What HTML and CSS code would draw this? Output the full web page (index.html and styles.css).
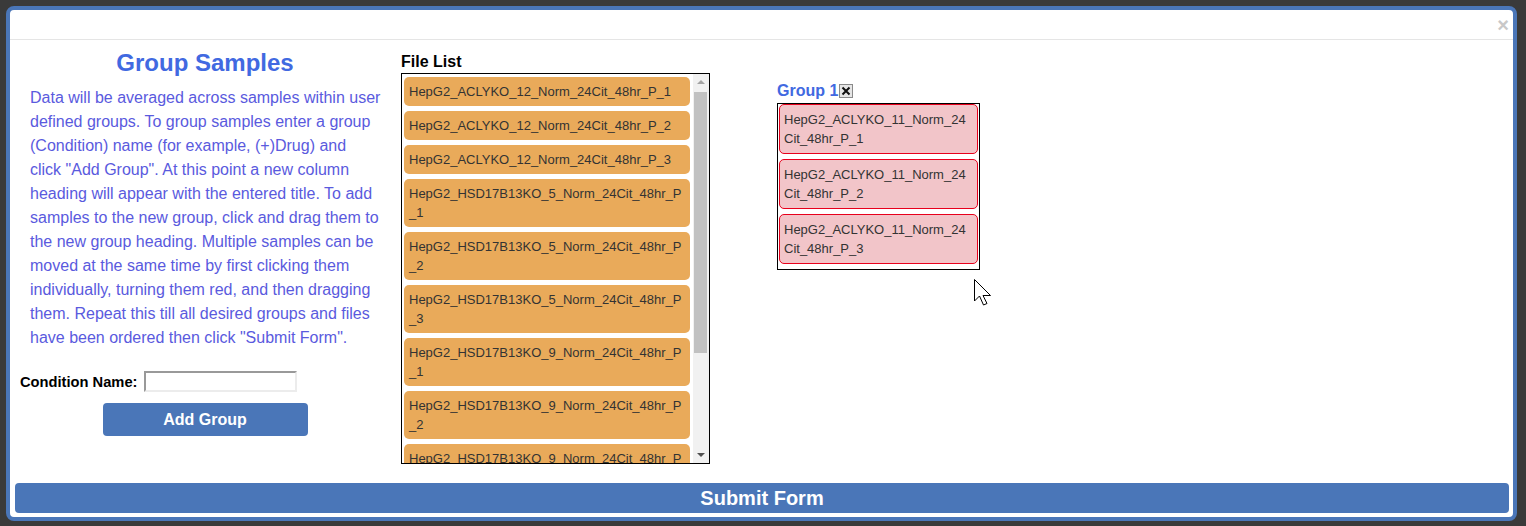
FILE: index.html
```html
<!DOCTYPE html>
<html lang="en">
<head>
    <meta charset="UTF-8">
    <title>Group Samples</title>
    <link rel="stylesheet" href="styles.css">
</head>
<body>
    <div class="modal">
        <div class="modal-header">
            <span class="close">&times;</span>
        </div>
        <div class="modal-body">
            <div class="intro">
                <h2>Group Samples</h2>
                <p>Data will be averaged across samples within user defined groups. To group samples enter a group (Condition) name (for example, (+)Drug) and click "Add Group". At this point a new column heading will appear with the entered title. To add samples to the new group, click and drag them to the new group heading. Multiple samples can be moved at the same time by first clicking them individually, turning them red, and then dragging them. Repeat this till all desired groups and files have been ordered then click "Submit Form".</p>
                <div class="condition-row">
                    <label for="condition">Condition Name:</label>
                    <input type="text" id="condition">
                </div>
                <button class="btn add-btn">Add Group</button>
            </div>

            <div class="file-col">
                <div class="col-title">File List</div>
                <div class="file-list">
                    <div class="file-items">
                        <div class="sample">HepG2_ACLYKO_12_Norm_24Cit_48hr_P_1</div>
                        <div class="sample">HepG2_ACLYKO_12_Norm_24Cit_48hr_P_2</div>
                        <div class="sample">HepG2_ACLYKO_12_Norm_24Cit_48hr_P_3</div>
                        <div class="sample">HepG2_HSD17B13KO_5_Norm_24Cit_48hr_P_1</div>
                        <div class="sample">HepG2_HSD17B13KO_5_Norm_24Cit_48hr_P_2</div>
                        <div class="sample">HepG2_HSD17B13KO_5_Norm_24Cit_48hr_P_3</div>
                        <div class="sample">HepG2_HSD17B13KO_9_Norm_24Cit_48hr_P_1</div>
                        <div class="sample">HepG2_HSD17B13KO_9_Norm_24Cit_48hr_P_2</div>
                        <div class="sample">HepG2_HSD17B13KO_9_Norm_24Cit_48hr_P_3</div>
                    </div>
                    <div class="scrollbar">
                        <div class="scroll-btn up"></div>
                        <div class="scroll-track"><div class="scroll-thumb"></div></div>
                        <div class="scroll-btn down"></div>
                    </div>
                </div>
            </div>

            <div class="group-col">
                <div class="group-title">Group 1<svg class="remove" width="14" height="14" viewBox="0 0 14 14"><rect x="0.5" y="0.5" width="13" height="13" fill="#e6e6e6" stroke="#8a8a8a"/><path d="M3.5 3.5 L10.5 10.5 M10.5 3.5 L3.5 10.5" stroke="#111" stroke-width="2"/></svg></div>
                <div class="group-box">
                    <div class="sample picked">HepG2_ACLYKO_11_Norm_24Cit_48hr_P_1</div>
                    <div class="sample picked">HepG2_ACLYKO_11_Norm_24Cit_48hr_P_2</div>
                    <div class="sample picked">HepG2_ACLYKO_11_Norm_24Cit_48hr_P_3</div>
                </div>
            </div>
        </div>
        <div class="modal-footer">
            <button class="btn submit-btn">Submit Form</button>
        </div>

        <svg class="cursor" width="20" height="28" viewBox="0 0 20 28"><path d="M0.5 0.5 V22 L5.5 17 L9.5 26 L13 24.5 L9 16.5 H16.5 Z" fill="#fff" stroke="#000" stroke-width="1"/></svg>
    </div>
</body>
</html>
```

FILE: styles.css
```css
body {
    margin: 0;
    background: #3a3a3a;
    font-family: "Liberation Sans", Arial, sans-serif;
}
.modal {
    position: relative;
    margin: 6px;
    width: 1503px;
    height: 507px;
    border: 4px solid #4a76b8;
    border-radius: 8px;
    background: #fff;
    display: flex;
    flex-direction: column;
}
.modal-header {
    height: 29px;
    border-bottom: 1px solid #e5e5e5;
    display: flex;
    justify-content: flex-end;
    align-items: center;
    padding-right: 4px;
}
.close {
    font-size: 20px;
    font-weight: bold;
    line-height: 20px;
    color: #c8c8c8;
    margin-top: 1px;
}
.modal-body {
    flex: 1;
    display: flex;
    padding-left: 10px;
}
.intro {
    width: 370px;
    display: flex;
    flex-direction: column;
}
.intro h2 {
    margin: 9px 0 9px;
    font-size: 24px;
    line-height: 28px;
    text-align: center;
    color: #4169e1;
}
.intro p {
    margin: 0;
    padding: 0 9px 0 10px;
    font-size: 16px;
    line-height: 24px;
    color: #5a5ade;
}
.condition-row {
    display: flex;
    align-items: center;
    gap: 6px;
    margin-top: 21px;
}
.condition-row label {
    font-size: 14.7px;
    font-weight: bold;
    color: #000;
}
.condition-row input {
    width: 149px;
    height: 17px;
    padding: 0;
    border-width: 2px;
    border-style: solid;
    border-color: #999 #ececec #ececec #999;
}
.btn {
    border: none;
    border-radius: 4px;
    background: #4a76b8;
    color: #fff;
    font-family: "Liberation Sans", Arial, sans-serif;
    font-weight: bold;
    cursor: pointer;
}
.add-btn {
    align-self: center;
    width: 205px;
    height: 33px;
    margin-top: 11px;
    font-size: 16px;
}
.file-col {
    margin-left: 11px;
    width: 309px;
}
.col-title, .group-title {
    font-size: 16px;
    font-weight: bold;
    line-height: 19px;
}
.col-title {
    margin: 12px 0 2px;
    color: #000;
}
.file-list {
    box-sizing: border-box;
    height: 391px;
    border: 1px solid #000;
    display: flex;
}
.file-items {
    flex: 1;
    overflow: hidden;
    padding-top: 3px;
}
.file-items .sample {
    margin: 0 3px 5px 2px;
}
.scrollbar {
    width: 16px;
    background: #f1f1f1;
    display: flex;
    flex-direction: column;
}
.scroll-btn {
    height: 17px;
    display: flex;
    align-items: center;
    justify-content: center;
}
.scroll-btn::before {
    content: "";
    border-left: 4px solid transparent;
    border-right: 4px solid transparent;
}
.scroll-btn.up::before {
    border-bottom: 4px solid #a3a3a3;
    margin-top: -1px;
}
.scroll-btn.down::before {
    border-top: 4px solid #505050;
}
.scroll-track {
    flex: 1;
    padding: 1px 2px 0 1px;
}
.scroll-thumb {
    height: 261px;
    background: #c1c1c1;
}
.sample {
    margin: 0 3px 5px;
    padding: 5px;
    border-radius: 5px;
    background: #e9aa5a;
    color: #333;
    font-size: 13px;
    line-height: 19px;
    word-break: break-all;
}
.group-col {
    margin-left: 67px;
    width: 203px;
}
.group-title {
    margin: 41px 0 3px;
    color: #4169e1;
}
.remove {
    vertical-align: -2px;
    margin-left: 1px;
}
.group-box {
    border: 1px solid #000;
    padding: 0 1px;
}
.sample.picked {
    margin: 0 0 5px;
    padding: 5px 4px;
    border: 1px solid #e8001c;
    background: #f2c5c9;
}
.modal-footer {
    padding: 0 4px 4px 5px;
}
.submit-btn {
    width: 100%;
    height: 30px;
    font-size: 20px;
}
.cursor {
    position: absolute;
    left: 964px;
    top: 269px;
}
```
